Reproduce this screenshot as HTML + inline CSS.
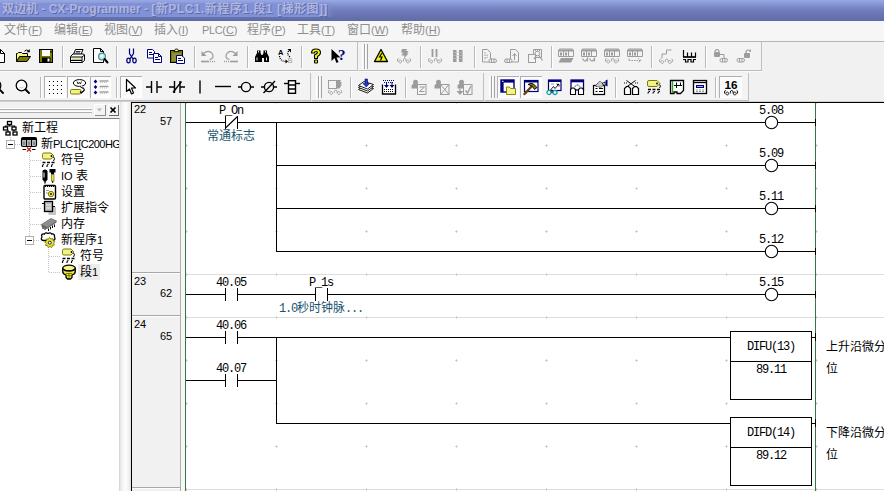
<!DOCTYPE html>
<html lang="zh-CN">
<head>
<meta charset="utf-8">
<title>双边机 - CX-Programmer</title>
<style>
html,body{margin:0;padding:0}
body{width:884px;height:491px;overflow:hidden;position:relative;background:#f1f1f1;
 font-family:"Liberation Sans","Noto Sans CJK SC","WenQuanYi Zen Hei",sans-serif;font-size:12px;color:#000}
.abs{position:absolute}
#title{position:absolute;left:0;top:0;width:884px;height:21px;
 background:linear-gradient(to bottom,#98a8e5 0px,#8b9bd9 3px,#7a88c8 7px,#6f7cba 11px,#6673af 16px,#606ca7 21px)}
#title em{position:absolute;left:0;top:3px;width:334px;height:14px;background:linear-gradient(to right,#8292d9 0,#8090d6 322px,rgba(128,144,214,0) 334px)}
#title span{position:absolute;left:2px;top:2px;font-weight:bold;font-family:"Liberation Sans","Noto Sans CJK SC",sans-serif;font-size:12px;line-height:14px;color:#afb6de;white-space:nowrap;letter-spacing:0px;
 text-shadow:1px 1px 0 rgba(70,80,150,.6)}
#menu{position:absolute;left:0;top:21px;width:884px;height:20px;background:#f6f6f6;border-bottom:1px solid #b4b4b4}
#menu span{position:absolute;top:2px;font-size:12px;line-height:15px;color:#8e8e8e;white-space:nowrap}
#menu b{font-weight:normal;font-size:11px}
#menu u{text-decoration:underline;text-underline-offset:1px}
.tb{position:absolute;background:#f3f3f3;border-right:1px solid #c0c0c0;border-bottom:1px solid #bdbdbd;box-shadow:0 1px 0 #fbfbfb}
.grip{position:absolute;width:1px;border-left:1px solid #fff;border-right:1px solid #a4a4a4;background:#f3f3f3}
.sep{position:absolute;width:1px;background:#b9b9b9;box-shadow:1px 0 0 #fff}
.prs{position:absolute;background:#fbfbfb;box-shadow:inset 1px 1px 0 #b0b0b0,inset -1px -1px 0 #fff}
.ic{position:absolute;width:16px;height:16px;overflow:visible}
#left{position:absolute;left:0;top:118px;width:119px;height:373px;background:#fff;border-top:1px solid #7f7f7f;border-right:1px solid #d8d8d8;overflow:hidden}
.tr{position:absolute;font-size:12px;line-height:16px;white-space:nowrap;color:#000}
.lad{font-family:"Liberation Mono","Noto Sans CJK SC","WenQuanYi Zen Hei",monospace}
</style>
</head>
<body>
<div id="title"><em></em><span>双边机 - CX-Programmer - <i style="font-style:normal;letter-spacing:.5px">[新PLC1.新程序1.段1 [梯形图]]</i></span></div>
<div id="menu">
<span style="left:4px">文件<b>(<u>F</u>)</b></span>
<span style="left:54px">编辑<b>(<u>E</u>)</b></span>
<span style="left:104px">视图<b>(<u>V</u>)</b></span>
<span style="left:154px">插入<b>(<u>I</u>)</b></span>
<span style="left:202px"><b style="letter-spacing:-.4px">PLC</b><b>(<u>C</u>)</b></span>
<span style="left:247px">程序<b>(<u>P</u>)</b></span>
<span style="left:297px">工具<b>(<u>T</u>)</b></span>
<span style="left:347px">窗口<b>(<u>W</u>)</b></span>
<span style="left:401px">帮助<b>(<u>H</u>)</b></span>
</div>
<div class="tb" style="left:-5px;top:42px;width:362px;height:28px"></div>
<div class="tb" style="left:359px;top:42px;width:402px;height:28px"></div>
<div class="grip" style="left:362px;top:44px;height:25px"></div><div class="grip" style="left:365px;top:44px;height:25px"></div>
<svg class="ic" style="left:-9px;top:48px" width="16" height="16" viewBox="0 0 16 16"><path d="M2.5 1.5h7l4 4v9h-11z" fill="#fff" stroke="#000"/><path d="M9.5 1.5v4h4" fill="none" stroke="#000"/></svg>
<svg class="ic" style="left:15px;top:48px" width="16" height="16" viewBox="0 0 16 16"><path d="M1.5 13.5v-8h1l1-1h3l1 1h5v3" fill="#f3f389" stroke="#000"/><path d="M1.5 13.5l3-5h11l-3.5 5z" fill="#7b7b00" stroke="#000" stroke-linejoin="round"/><path d="M9.5 3.2q2-2.4 4.2-.2" fill="none" stroke="#000"/><path d="M14.8 1v3.2h-3.2z" fill="#000"/></svg>
<svg class="ic" style="left:38px;top:48px" width="16" height="16" viewBox="0 0 16 16"><rect x="1.5" y="1.5" width="13" height="13" fill="#7b7b00" stroke="#000"/><rect x="4" y="2" width="8" height="6" fill="#fff"/><rect x="4" y="9.5" width="8.5" height="5" fill="#000"/><rect x="9.5" y="10.5" width="2" height="3" fill="#fff"/><rect x="12.5" y="3" width="1" height="2" fill="#000"/></svg>
<svg class="ic" style="left:69px;top:48px" width="16" height="16" viewBox="0 0 16 16"><path d="M4.5 6.5l2-5h7.5l-2 5z" fill="#fff" stroke="#000" stroke-linejoin="round"/><path d="M7 3.5h4.5M6.5 5h4.5" stroke="#000" stroke-width=".8"/><path d="M1.5 8.500l2.500-2.500h10.500l1 1v5.500l-2.500 2h-11.500z" fill="#fff" stroke="#000" stroke-linejoin="round"/><path d="M1.500 9h11.500l2.500-2M13 9v5.500" fill="none" stroke="#000"/><rect x="2.500" y="10.500" width="9.500" height="1.500" fill="#c9c97a"/><path d="M2 12.500h11" stroke="#000"/></svg>
<svg class="ic" style="left:92px;top:48px" width="16" height="16" viewBox="0 0 16 16"><path d="M1.500 .500h7l3 3v11h-10z" fill="#fff" stroke="#000"/><path d="M8.500 .500v3h3" fill="none" stroke="#000"/><circle cx="10" cy="8.500" r="3.400" fill="#b9eeee" stroke="#4f8f8f" stroke-width="1.300"/><circle cx="9.500" cy="8" r="1.500" fill="#fff" opacity=".7"/><path d="M12.500 11l3 3.500" stroke="#000" stroke-width="2" stroke-linecap="round"/></svg>
<svg class="ic" style="left:123px;top:48px" width="16" height="16" viewBox="0 0 16 16"><path d="M6.500 .5v5l3.500 5.500M10.500 .5v5l-3.500 5.500" fill="none" stroke="#00007b" stroke-width="1.200"/><ellipse cx="5.500" cy="12.500" rx="1.700" ry="2.300" fill="none" stroke="#00007b" stroke-width="1.200"/><ellipse cx="11.500" cy="12.500" rx="1.700" ry="2.300" fill="none" stroke="#00007b" stroke-width="1.200"/></svg>
<svg class="ic" style="left:146px;top:48px" width="16" height="16" viewBox="0 0 16 16"><path d="M1.500 1.500h5l2 2v6.500h-7z" fill="#fff" stroke="#00007b"/><path d="M3 4.500h3M3 6.500h4" stroke="#00007b"/><path d="M7.500 5.500h5l3 3v6h-8z" fill="#fff" stroke="#00007b"/><path d="M12.500 5.500v3h3" fill="none" stroke="#00007b"/><path d="M9 9.500h3M9 11.500h5" stroke="#00007b"/></svg>
<svg class="ic" style="left:169px;top:48px" width="16" height="16" viewBox="0 0 16 16"><rect x="1.500" y="2.500" width="12" height="12" fill="#7b7b00" stroke="#000"/><path d="M5 3.500l1.500-2.500h2l1.500 2.500z" fill="#f3f389" stroke="#000" stroke-width=".8"/><path d="M3 5h9v8h-9z" fill="#8e8e3f"/><path d="M7.500 7.500h5l3 2.500v5.500h-8z" fill="#fff" stroke="#00007b"/><path d="M9 10.500h3M9 12.500h5" stroke="#00007b"/></svg>
<svg class="ic" style="left:200px;top:48px" width="16" height="16" viewBox="0 0 16 16"><path d="M3.500 5.500q5.500-4.500 9 .5 2 4.500-3 5.500" fill="none" stroke="#9c9c9c" stroke-width="1.200"/><path d="M1.500 3v5h5z" fill="#9c9c9c"/><path d="M1 13.500h8" stroke="#9c9c9c" stroke-width="1.600"/><path d="M10 13.500h5" stroke="#9c9c9c" stroke-width="1.400" stroke-dasharray="1 1"/></svg>
<svg class="ic" style="left:223px;top:48px" width="16" height="16" viewBox="0 0 16 16"><path d="M12.500 5.500q-5.500-4.500-9 .5-2 4.500 3 5.500" fill="none" stroke="#9c9c9c" stroke-width="1.200"/><path d="M14.500 3v5h-5z" fill="#9c9c9c"/><path d="M7 13.500h8" stroke="#9c9c9c" stroke-width="1.600"/><path d="M1 13.500h5" stroke="#9c9c9c" stroke-width="1.400" stroke-dasharray="1 1"/></svg>
<svg class="ic" style="left:254px;top:48px" width="16" height="16" viewBox="0 0 16 16"><path d="M1 14v-5l2-4v-2.500h3.500v2.500l1 2h1l1-2v-2.500h3.500v2.500l2 4v5h-5v-4h-2v4z" fill="#000"/><path d="M4.500 3v1.500M3 9.500v3M12.500 9.500v3M11.500 3v1.500" stroke="#fff" stroke-width=".9"/></svg>
<svg class="ic" style="left:277px;top:48px" width="16" height="16" viewBox="0 0 16 16"><text x="1" y="6.500" font-family="Liberation Sans,sans-serif" font-size="7.500" font-weight="bold" fill="#000">A</text><text x="10.500" y="15" font-family="Liberation Sans,sans-serif" font-size="7.500" fill="#9c9c9c">B</text><path d="M2.500 8q.5 5 6 5.500" fill="none" stroke="#000" stroke-width="1.200" stroke-dasharray="1 1"/><path d="M8.500 11.500l2.500 2-2.500 2z" fill="#000"/><path d="M13 9q-4-3-1-6.500" fill="none" stroke="#000" stroke-width="1.200" stroke-dasharray="1 1"/><path d="M10.500 1h3.500v3.500z" fill="#000"/></svg>
<svg class="ic" style="left:308px;top:48px" width="16" height="16" viewBox="0 0 16 16"><path d="M3.500 5q0-4 4.500-4t4.500 3.500q0 2.500-3 4v2h-3v-3.500q3-1.500 3-2.500 0-1-1.500-1t-1.500 1.500z" fill="#f4f400" stroke="#000" stroke-width="1.100" stroke-linejoin="round"/><rect x="6.500" y="12" width="3" height="3" rx=".8" fill="#f4f400" stroke="#000" stroke-width="1.100"/></svg>
<svg class="ic" style="left:331px;top:48px" width="16" height="16" viewBox="0 0 16 16"><path d="M.5 1v12l3-3 2 5 2-1-2-4.500h4z" fill="#000"/><text x="7" y="11.500" font-family="Liberation Serif,serif" font-size="15" font-weight="bold" fill="#00007b">?</text></svg>
<svg class="ic" style="left:373px;top:48px" width="16" height="16" viewBox="0 0 16 16"><path d="M8 1.500l6.500 12h-13z" fill="#f4f400" stroke="#000" stroke-width="1.300" stroke-linejoin="round"/><path d="M9 5l-2.500 4h2.500l-1.500 3.500" fill="none" stroke="#000" stroke-width="1.200"/></svg>
<svg class="ic" style="left:396px;top:48px" width="16" height="16" viewBox="0 0 16 16"><path d="M6 1h5l-1 2h2.500l-1.500 2.500h1.500l-4.500 5 .5-3h-3l1.500-3h-2z" fill="#9c9c9c"/><path d="M1.5 13.5v-1.5q0-1.5 1.3-1.5M4.2 12.0a1.4 1.5 0 1 0 .1 0M7.3 13.5v-1.5q.2-1.5 1.5-1.5 1.3 0 1.3 1.5v1.5M11.8 12.0a1.4 1.5 0 1 0 .1 0M14.6 13.5v-1.5q0-1.5-1-1.5" stroke="#9c9c9c" stroke-width=".9" fill="none"/></svg>
<svg class="ic" style="left:427px;top:48px" width="16" height="16" viewBox="0 0 16 16"><path d="M5.500 1v8M9.500 1v8" stroke="#9c9c9c" stroke-width="1.800"/><path d="M1.5 13.5v-1.5q0-1.5 1.3-1.5M4.2 12.0a1.4 1.5 0 1 0 .1 0M7.3 13.5v-1.5q.2-1.5 1.5-1.5 1.3 0 1.3 1.5v1.5M11.8 12.0a1.4 1.5 0 1 0 .1 0M14.6 13.5v-1.5q0-1.5-1-1.5" stroke="#9c9c9c" stroke-width=".9" fill="none"/></svg>
<svg class="ic" style="left:450px;top:48px" width="16" height="16" viewBox="0 0 16 16"><rect x="3" y="2" width="3.500" height="12" fill="#9c9c9c"/><rect x="9" y="2" width="3.500" height="12" fill="#9c9c9c"/><path d="M3 4.500h10M3 7.500h10M3 10.500h10" stroke="#c4c4c4" stroke-width=".6"/></svg>
<svg class="ic" style="left:481px;top:48px" width="16" height="16" viewBox="0 0 16 16"><path d="M1.500 1.500h5l3 3v9.500h-8z" fill="none" stroke="#9c9c9c"/><path d="M4 4v6M6 6.500v3M3.500 11l3-2" stroke="#9c9c9c" stroke-dasharray="1.500 1"/><rect x="8" y="11" width="7.500" height="3.500" rx="1.700" fill="#f3f3f3" stroke="#9c9c9c"/><path d="M10.5 11v3.500M13 11v3.500" stroke="#9c9c9c"/></svg>
<svg class="ic" style="left:504px;top:48px" width="16" height="16" viewBox="0 0 16 16"><path d="M6.500 1.500h5l3 3v9.500h-8z" fill="none" stroke="#9c9c9c"/><path d="M10.500 12v-6M8.500 8l2-2.500 2 2.500" fill="none" stroke="#9c9c9c"/><rect x="0.5" y="11" width="7.500" height="3.500" rx="1.700" fill="#f3f3f3" stroke="#9c9c9c"/><path d="M3.0 11v3.500M5.5 11v3.500" stroke="#9c9c9c"/></svg>
<svg class="ic" style="left:527px;top:48px" width="16" height="16" viewBox="0 0 16 16"><rect x="1.500" y="6.500" width="7" height="8" fill="none" stroke="#9c9c9c"/><path d="M6.500 6v-4.500h8v8h-5.500" fill="none" stroke="#9c9c9c"/><circle cx="10.500" cy="5.500" r="2.300" fill="none" stroke="#9c9c9c"/><path d="M9 8l-2 3M12 7.500l3.500 5" stroke="#9c9c9c" stroke-width="1.200"/><path d="M8 2.500h5" stroke="#9c9c9c" stroke-dasharray="1 1"/></svg>
<svg class="ic" style="left:558px;top:48px" width="16" height="16" viewBox="0 0 16 16"><path d="M.5 3q0-2 1.500-2h12q1.500 0 1.500 2v5.500h-15z" fill="#f3f3f3" stroke="#9c9c9c"/><path d="M1 2.500h14" stroke="#9c9c9c" stroke-width="2"/><path d="M5.500 3v5.500M10.500 3v5.500" stroke="#9c9c9c"/><rect x="2" y="4.500" width="2" height="3" fill="#9c9c9c"/><rect x="7" y="4.500" width="2" height="3" fill="#9c9c9c"/><path d="M3 10h12.500l-2.500 4.500h-12.500z" fill="#9c9c9c"/></svg>
<svg class="ic" style="left:581px;top:48px" width="16" height="16" viewBox="0 0 16 16"><path d="M.5 3q0-2 1.500-2h12q1.500 0 1.500 2v5.500h-15z" fill="#f3f3f3" stroke="#9c9c9c"/><path d="M1 2.500h14" stroke="#9c9c9c" stroke-width="2"/><path d="M5.500 3v5.500M10.500 3v5.500" stroke="#9c9c9c"/><rect x="2" y="4.500" width="2" height="3" fill="#9c9c9c"/><rect x="7" y="4.500" width="2" height="3" fill="#9c9c9c"/><path d="M1.500 10.500q1.500 3.500 3.500 2l1.500-2v3M8.500 10.500q1.500 3.500 3.500 2l1.500-2v3" fill="none" stroke="#9c9c9c" stroke-width="1.100"/></svg>
<svg class="ic" style="left:604px;top:48px" width="16" height="16" viewBox="0 0 16 16"><path d="M.5 3q0-2 1.500-2h12q1.500 0 1.500 2v5.500h-15z" fill="#f3f3f3" stroke="#9c9c9c"/><path d="M1 2.500h14" stroke="#9c9c9c" stroke-width="2"/><path d="M5.500 3v5.500M10.500 3v5.500" stroke="#9c9c9c"/><rect x="2" y="4.500" width="2" height="3" fill="#9c9c9c"/><rect x="7" y="4.500" width="2" height="3" fill="#9c9c9c"/><path d="M1.5 13.5v-1.5q0-1.5 1.3-1.5M4.2 12.0a1.4 1.5 0 1 0 .1 0M7.3 13.5v-1.5q.2-1.5 1.5-1.5 1.3 0 1.3 1.5v1.5M11.8 12.0a1.4 1.5 0 1 0 .1 0M14.6 13.5v-1.5q0-1.5-1-1.5" stroke="#9c9c9c" stroke-width=".9" fill="none"/></svg>
<svg class="ic" style="left:627px;top:48px" width="16" height="16" viewBox="0 0 16 16"><path d="M.5 3q0-2 1.500-2h12q1.500 0 1.500 2v5.500h-15z" fill="#f3f3f3" stroke="#9c9c9c"/><path d="M1 2.500h14" stroke="#9c9c9c" stroke-width="2"/><path d="M5.500 3v5.500M10.500 3v5.500" stroke="#9c9c9c"/><rect x="2" y="4.500" width="2" height="3" fill="#9c9c9c"/><rect x="7" y="4.500" width="2" height="3" fill="#9c9c9c"/><path d="M2 12.500h12M11 10.500l3 2-3 2M2 10.500v2" fill="none" stroke="#9c9c9c" stroke-dasharray="1.500 1"/></svg>
<svg class="ic" style="left:658px;top:48px" width="16" height="16" viewBox="0 0 16 16"><path d="M4 10.500v-4.500h4.500v-4h5" fill="none" stroke="#9c9c9c"/><path d="M1.5 14v-1.5q0-1.5 1.3-1.5M4.2 12.5a1.4 1.5 0 1 0 .1 0M7.3 14v-1.5q.2-1.5 1.5-1.5 1.3 0 1.3 1.5v1.5M11.8 12.5a1.4 1.5 0 1 0 .1 0M14.6 14v-1.5q0-1.5-1-1.5" stroke="#9c9c9c" stroke-width=".9" fill="none"/></svg>
<svg class="ic" style="left:681px;top:48px" width="16" height="16" viewBox="0 0 16 16"><path d="M2.500 2v7M6.500 4.500v4.500M10.500 4.500v4.500M14.500 4.500v4.500" stroke="#000" stroke-width="1.200"/><path d="M2 9h13" stroke="#000" stroke-width="1.700"/><path d="M2 11.500h2.500v2.500h2.500v-2.500h3v2.500h2.500v-2.500h2.500" fill="none" stroke="#000" stroke-width="1.200"/></svg>
<svg class="ic" style="left:713px;top:48px" width="16" height="16" viewBox="0 0 16 16"><path d="M2 4q0-2.500 2-2.500t2 2.500v.5" fill="none" stroke="#9c9c9c" stroke-width="1.200"/><rect x="1" y="4" width="6" height="5" rx="1" fill="#9c9c9c"/><path d="M7 6.500h4v4" fill="none" stroke="#9c9c9c"/><rect x="7" y="10.5" width="7.500" height="3.500" rx="1.700" fill="#f3f3f3" stroke="#9c9c9c"/><path d="M9.5 10.5v3.500M12 10.5v3.500" stroke="#9c9c9c"/></svg>
<svg class="ic" style="left:736px;top:48px" width="16" height="16" viewBox="0 0 16 16"><path d="M10 5q0-3 2-3t2 2" fill="none" stroke="#9c9c9c" stroke-width="1.200"/><rect x="8" y="5" width="6" height="5" rx="1" fill="#9c9c9c"/><path d="M14.500 1.500v2" stroke="#9c9c9c"/><rect x="1" y="10.5" width="7.500" height="3.500" rx="1.700" fill="#f3f3f3" stroke="#9c9c9c"/><path d="M3.5 10.5v3.500M6 10.5v3.500" stroke="#9c9c9c"/></svg>
<div class="sep" style="left:62px;top:46px;height:22px"></div>
<div class="sep" style="left:116px;top:46px;height:22px"></div>
<div class="sep" style="left:194px;top:46px;height:22px"></div>
<div class="sep" style="left:247px;top:46px;height:22px"></div>
<div class="sep" style="left:301px;top:46px;height:22px"></div>
<div class="sep" style="left:420px;top:46px;height:22px"></div>
<div class="sep" style="left:474px;top:46px;height:22px"></div>
<div class="sep" style="left:551px;top:46px;height:22px"></div>
<div class="sep" style="left:651px;top:46px;height:22px"></div>
<div class="sep" style="left:705px;top:46px;height:22px"></div>
<div class="tb" style="left:-5px;top:73px;width:315px;height:27px"></div>
<div class="tb" style="left:312px;top:73px;width:171px;height:27px"></div>
<div class="grip" style="left:316px;top:76px;height:22px"></div><div class="grip" style="left:319px;top:76px;height:22px"></div>
<div class="tb" style="left:485px;top:73px;width:263px;height:27px"></div>
<div class="grip" style="left:489px;top:76px;height:22px"></div><div class="grip" style="left:492px;top:76px;height:22px"></div>
<div class="prs" style="left:44px;top:76px;width:22px;height:22px"></div>
<div class="prs" style="left:67px;top:76px;width:22px;height:22px"></div>
<div class="prs" style="left:90px;top:76px;width:21px;height:22px"></div>
<div class="prs" style="left:120px;top:76px;width:22px;height:22px"></div>
<div class="prs" style="left:497px;top:76px;width:22px;height:22px"></div>
<div class="prs" style="left:520px;top:76px;width:22px;height:22px"></div>
<div class="prs" style="left:719px;top:76px;width:23px;height:22px"></div>
<svg class="ic" style="left:-11.5px;top:79px" width="16" height="16" viewBox="0 0 16 16"><circle cx="6.500" cy="6.500" r="5.300" fill="#fdfdfd" stroke="#000" stroke-width="1.300"/><path d="M4.500 8q2 2 4 0" fill="none" stroke="#c8c8c8"/><path d="M10.500 10.500l3.500 3.500" stroke="#000" stroke-width="1.900" stroke-linecap="round"/></svg>
<svg class="ic" style="left:15px;top:79px" width="16" height="16" viewBox="0 0 16 16"><circle cx="6.500" cy="6.500" r="5.300" fill="#fdfdfd" stroke="#000" stroke-width="1.300"/><path d="M4.500 8q2 2 4 0" fill="none" stroke="#c8c8c8"/><path d="M10.500 10.500l3.500 3.500" stroke="#000" stroke-width="1.900" stroke-linecap="round"/></svg>
<svg class="ic" style="left:47px;top:79px" width="16" height="16" viewBox="0 0 16 16"><rect x="2" y="2" width="1" height="1" fill="#000"/><rect x="2" y="6" width="1" height="1" fill="#000"/><rect x="2" y="10" width="1" height="1" fill="#000"/><rect x="2" y="14" width="1" height="1" fill="#000"/><rect x="6" y="2" width="1" height="1" fill="#000"/><rect x="6" y="6" width="1" height="1" fill="#000"/><rect x="6" y="10" width="1" height="1" fill="#000"/><rect x="6" y="14" width="1" height="1" fill="#000"/><rect x="10" y="2" width="1" height="1" fill="#000"/><rect x="10" y="6" width="1" height="1" fill="#000"/><rect x="10" y="10" width="1" height="1" fill="#000"/><rect x="10" y="14" width="1" height="1" fill="#000"/><rect x="14" y="2" width="1" height="1" fill="#000"/><rect x="14" y="6" width="1" height="1" fill="#000"/><rect x="14" y="10" width="1" height="1" fill="#000"/><rect x="14" y="14" width="1" height="1" fill="#000"/></svg>
<svg class="ic" style="left:70px;top:79px" width="16" height="16" viewBox="0 0 16 16"><path d="M11.500 6.500l3 4-4.500-3z" fill="#fff" stroke="#000" stroke-width=".9" stroke-linejoin="round"/><ellipse cx="9.500" cy="4" rx="6.200" ry="3.400" fill="#fff" stroke="#000" stroke-width="1"/><path d="M11 6.800l1.500 1" stroke="#fff" stroke-width="1.200"/><path d="M7 2.500l1 2.500 1.200-1.700 1.200 1.700 1-2.500" fill="none" stroke="#000" stroke-width=".8"/><rect x=".5" y="10.500" width="10.500" height="4.500" rx="1.200" fill="#f3f389" stroke="#7b7b00"/><path d="M10 12.500l1.500 1.500 3-3" fill="none" stroke="#000" stroke-width="1.200"/></svg>
<svg class="ic" style="left:93px;top:79px" width="16" height="16" viewBox="0 0 16 16"><path d="M2.500 0.5l1.800 2-1.800 2-1.800-2z" fill="#00007b"/><path d="M6.500 2.0h9" stroke="#9c9c9c" stroke-width="1.400"/><path d="M7 3.5h8" stroke="#c4c4c4" stroke-dasharray="1 1"/><path d="M2.500 6l1.800 2-1.800 2-1.800-2z" fill="#00007b"/><path d="M6.500 7.5h9" stroke="#9c9c9c" stroke-width="1.400"/><path d="M7 9h8" stroke="#c4c4c4" stroke-dasharray="1 1"/><path d="M2.500 11.5l1.800 2-1.800 2-1.800-2z" fill="#00007b"/><path d="M6.500 13.0h9" stroke="#9c9c9c" stroke-width="1.400"/><path d="M7 14.5h8" stroke="#c4c4c4" stroke-dasharray="1 1"/></svg>
<svg class="ic" style="left:123px;top:79px" width="16" height="16" viewBox="0 0 16 16"><path d="M3.500 .500v12l3-2.500 2 5 2-1-2-5h4z" fill="#fff" stroke="#000" stroke-width="1.200" stroke-linejoin="round"/></svg>
<svg class="ic" style="left:146px;top:79px" width="16" height="16" viewBox="0 0 16 16"><path d="M0 8h5M11 8h5" stroke="#000" stroke-width="1.400"/><path d="M5.500 2v12M11 2v12" stroke="#000" stroke-width="1.400"/></svg>
<svg class="ic" style="left:169px;top:79px" width="16" height="16" viewBox="0 0 16 16"><path d="M0 8h5M11 8h5" stroke="#000" stroke-width="1.400"/><path d="M5.500 2v12M11 2v12" stroke="#000" stroke-width="1.400"/><path d="M4 13.500l8.500-11" stroke="#000" stroke-width="1.300"/></svg>
<svg class="ic" style="left:192px;top:79px" width="16" height="16" viewBox="0 0 16 16"><path d="M8 1.500v13" stroke="#000" stroke-width="1.400"/></svg>
<svg class="ic" style="left:215px;top:79px" width="16" height="16" viewBox="0 0 16 16"><path d="M0 7.500h16" stroke="#000" stroke-width="1.400"/></svg>
<svg class="ic" style="left:238px;top:79px" width="16" height="16" viewBox="0 0 16 16"><path d="M0 8h3.500M12.500 8h3.500" stroke="#000" stroke-width="1.500"/><circle cx="8" cy="8" r="4.600" fill="none" stroke="#000" stroke-width="1.400"/></svg>
<svg class="ic" style="left:261px;top:79px" width="16" height="16" viewBox="0 0 16 16"><path d="M0 8h3.500M12.500 8h3.500" stroke="#000" stroke-width="1.500"/><circle cx="8" cy="8" r="4.600" fill="none" stroke="#000" stroke-width="1.400"/><path d="M2.500 14l11.500-12" stroke="#000" stroke-width="1.300"/></svg>
<svg class="ic" style="left:284px;top:79px" width="16" height="16" viewBox="0 0 16 16"><path d="M0 4.500h16" stroke="#000" stroke-width="1.400"/><rect x="4.500" y="1.700" width="7" height="12.600" fill="#fff" stroke="#000" stroke-width="1.400"/><path d="M4.500 6h7M4.500 10h7" stroke="#000" stroke-width="1.300"/></svg>
<svg class="ic" style="left:327px;top:79px" width="16" height="16" viewBox="0 0 16 16"><rect x="1.500" y="1.500" width="8" height="8" fill="none" stroke="#9c9c9c"/><path d="M9 1h5l-1 2h2l-1.500 2.500h1.500l-2.500 4h-3.500z" fill="#9c9c9c"/><path d="M1.5 14v-1.5q0-1.5 1.3-1.5M4.2 12.5a1.4 1.5 0 1 0 .1 0M7.3 14v-1.5q.2-1.5 1.5-1.5 1.3 0 1.3 1.5v1.5M11.8 12.5a1.4 1.5 0 1 0 .1 0M14.6 14v-1.5q0-1.5-1-1.5" stroke="#9c9c9c" stroke-width=".9" fill="none"/></svg>
<svg class="ic" style="left:358px;top:79px" width="16" height="16" viewBox="0 0 16 16"><path d="M.5 10.500l5.500-4 9.500 3-6 4.500z" fill="#fff" stroke="#000" stroke-width=".9"/><path d="M.5 8.500l5.500-4 9.500 3-6 4.500z" fill="#fff" stroke="#000" stroke-width=".9"/><path d="M.5 6.500l5.500-4 9.500 3-6 4.500z" fill="#fff" stroke="#000" stroke-width=".9"/><path d="M7 0h2.500v4.500h2l-3.200 3.500-3.300-3.500h2z" fill="#1b3fc0" stroke="#00007b" stroke-width=".6"/></svg>
<svg class="ic" style="left:381px;top:79px" width="16" height="16" viewBox="0 0 16 16"><path d="M1.500 5.500v9.500h13v-9.500" fill="#fff" stroke="#000" stroke-width="1.300"/><path d="M3 10.500h10M3 12.500h10" stroke="#000" stroke-dasharray="1 1"/><path d="M2 1.500h12M3 3.500h10" stroke="#00007b" stroke-dasharray="1 1"/><path d="M5 3v3h-2l2.500 3 2.500-3h-2v-3zM10.500 3v3h-2l2.500 3 2.500-3h-2v-3z" fill="#00007b"/></svg>
<svg class="ic" style="left:411px;top:79px" width="16" height="16" viewBox="0 0 16 16"><circle cx="4.500" cy="3.200" r="2.500" fill="#9c9c9c"/><path d="M.5 9.500v-2.500q0-2 2-2h4q2 0 2 2v2.500z" fill="#9c9c9c"/><rect x="6.500" y="5.500" width="8.500" height="10" fill="#f3f3f3" stroke="#9c9c9c"/><path d="M8.500 8h5l-5 4.500h5" fill="none" stroke="#9c9c9c"/></svg>
<svg class="ic" style="left:434px;top:79px" width="16" height="16" viewBox="0 0 16 16"><circle cx="4.500" cy="3.200" r="2.500" fill="#9c9c9c"/><path d="M.5 9.500v-2.500q0-2 2-2h4q2 0 2 2v2.500z" fill="#9c9c9c"/><rect x="6.500" y="5.500" width="8.500" height="10" fill="#f3f3f3" stroke="#9c9c9c"/><path d="M7 6l7.500 9M14.500 6l-7.500 9" stroke="#9c9c9c"/></svg>
<svg class="ic" style="left:457px;top:79px" width="16" height="16" viewBox="0 0 16 16"><circle cx="4.500" cy="3.200" r="2.500" fill="#9c9c9c"/><path d="M.5 9.500v-2.500q0-2 2-2h4q2 0 2 2v2.500z" fill="#9c9c9c"/><rect x="6.500" y="5.500" width="8.500" height="10" fill="#f3f3f3" stroke="#9c9c9c"/><path d="M8.500 11.500l2 2.500 3.500-7" fill="none" stroke="#9c9c9c" stroke-width="1.300"/><path d="M3 9.500v5M.8 12.500l2.200 2.500 2.200-2.500z" fill="#9c9c9c" stroke="#9c9c9c" stroke-width="1.200"/></svg>
<svg class="ic" style="left:500px;top:79px" width="16" height="16" viewBox="0 0 16 16"><rect x="1" y="1" width="13" height="12" fill="#fff" stroke="#00007b" stroke-width="1.400"/><rect x="1" y="1" width="13" height="2.600" fill="#00007b"/><rect x="1" y="1" width="2.600" height="12" fill="#00007b"/><rect x="2" y="1.800" width="1.500" height="1" fill="#fff"/><path d="M6.500 15.500v-7.500h3l1 1.500h5v6z" fill="#f3f389" stroke="#7b7b00" stroke-width=".9"/></svg>
<svg class="ic" style="left:523px;top:79px" width="16" height="16" viewBox="0 0 16 16"><rect x="1.500" y="1.500" width="13.500" height="11" fill="#fff" stroke="#00007b" stroke-width="1.200"/><rect x="1.500" y="1.500" width="13.500" height="2" fill="#00007b"/><path d="M1.500 15l7-7.500" stroke="#6b3c10" stroke-width="2.400" stroke-linecap="round"/><path d="M5 5.500q3-2 5.500-.5l3.500 3.500-2.500 2-2.500-3.500q-2-1-4-1.500z" fill="#7b7b00" stroke="#000" stroke-width=".9"/></svg>
<svg class="ic" style="left:546px;top:79px" width="16" height="16" viewBox="0 0 16 16"><rect x="2.500" y="1" width="12.500" height="10.500" fill="#fff" stroke="#00007b" stroke-width="1.200"/><rect x="2.500" y="1" width="12.500" height="2" fill="#00007b"/><path d="M5 5h3M10 5h3" stroke="#9c9c9c"/><path d="M4.500 11l3-3.500 1.500 2 3.500-4M11 5.500h2v2" fill="none" stroke="#000" stroke-width=".9"/><circle cx="3" cy="13.500" r="2" fill="#fff" stroke="#1fa3a3" stroke-width="1.300"/><circle cx="9" cy="13.500" r="2" fill="#fff" stroke="#1fa3a3" stroke-width="1.300"/><path d="M5 13h2" stroke="#000"/></svg>
<svg class="ic" style="left:569px;top:79px" width="16" height="16" viewBox="0 0 16 16"><rect x="2" y="1" width="12.500" height="10" fill="#fff" stroke="#00007b" stroke-width="1.300"/><rect x="2" y="1" width="12.500" height="2.300" fill="#00007b"/><path d="M6 7.500q2.500-3 5 0" fill="none" stroke="#000" stroke-dasharray="1.500 1"/><path d="M1.500 15.500v-5l1.500-1.500h2l1.500 1.500v5zM9.500 15.500v-5l1.500-1.500h2l1.500 1.500v5z" fill="#fff" stroke="#000" stroke-width="1.100"/></svg>
<svg class="ic" style="left:592px;top:79px" width="16" height="16" viewBox="0 0 16 16"><rect x="1.500" y="6.500" width="11" height="9" fill="#fff" stroke="#000" stroke-width="1.200"/><path d="M3.500 9.500h2M7 9.500h4M3.500 12.500h2M7 12.500h4" stroke="#000"/><path d="M3 7l5-5 4 3.500-3 3z" fill="#c9c9c9" stroke="#000" stroke-width=".8" stroke-dasharray="1 .6"/><path d="M10 4.500l3-1.500v4z" fill="#fff" stroke="#000" stroke-width=".8"/><path d="M13.500 1.500l2-1v7l-2-1z" fill="#00007b"/></svg>
<svg class="ic" style="left:623px;top:79px" width="16" height="16" viewBox="0 0 16 16"><path d="M1.500 15.500v-6l2-2h2l2 2v6zM9.500 15.500v-6l2-2h2l2 2v6z" fill="#fff" stroke="#000" stroke-width="1.200"/><path d="M3.500 1.500l9 6.500M12.500 1.500l-9 6.500" stroke="#000" stroke-width="1"/><path d="M1 4h3M12 4h3" stroke="#000" stroke-dasharray="1 1"/></svg>
<svg class="ic" style="left:646px;top:79px" width="16" height="16" viewBox="0 0 16 16"><path d="M1.500 3q0-1.500 1.500-1.500h8l3 3-3 3h-8q-1.500 0-1.500-1.500z" fill="#f3f389" stroke="#7b7b00" stroke-width="1"/><circle cx="11" cy="4.500" r=".9" fill="#000"/><path d="M13.500 5.500q2 1.500 0 3.500" fill="none" stroke="#000"/><path d="M2 10.500h12" stroke="#000" stroke-width="1.300" stroke-dasharray="3 1.500"/><path d="M2 14.500q0-2 2-2M7 14.500q0-2 2-2M12 14.500q0-2 2-2" fill="none" stroke="#000" stroke-width="1.100"/></svg>
<svg class="ic" style="left:669px;top:79px" width="16" height="16" viewBox="0 0 16 16"><path d="M1.500 1.500h13v10l-3 3h-3.500v-1.500h-3v1.500h-3.500z" fill="#fff" stroke="#000" stroke-width="1.300"/><path d="M3.500 2v12" stroke="#2e9e2e" stroke-width="1.400"/><path d="M5 6.500h8M7.500 3.500v5.500M11.500 3.500v3" stroke="#000" stroke-width="1"/></svg>
<svg class="ic" style="left:692px;top:79px" width="16" height="16" viewBox="0 0 16 16"><rect x="1.500" y="1.500" width="13" height="13" fill="#fff" stroke="#000" stroke-width="1.300"/><path d="M2 3.500h12" stroke="#000" stroke-width="1.300"/><rect x="4.500" y="6.500" width="7" height="2" fill="#9fa7e6" stroke="#00007b" stroke-width="1"/><path d="M4 11h8M4 12.500h8" stroke="#9c9c9c" stroke-dasharray="2 1"/></svg>
<svg class="ic" style="left:723px;top:79px" width="16" height="16" viewBox="0 0 16 16"><text x="1.500" y="10" font-family="Liberation Sans,DejaVu Sans,sans-serif" font-size="11.500" font-weight="bold" fill="#000" textLength="13" lengthAdjust="spacingAndGlyphs">16</text><path d="M1.5 14.5v-1.5q0-1.5 1.3-1.5M4.2 13.0a1.4 1.5 0 1 0 .1 0M7.3 14.5v-1.5q.2-1.5 1.5-1.5 1.3 0 1.3 1.5v1.5M11.8 13.0a1.4 1.5 0 1 0 .1 0M14.6 14.5v-1.5q0-1.5-1-1.5" stroke="#000" stroke-width=".9" fill="none"/></svg>
<div class="sep" style="left:40px;top:77px;height:21px"></div>
<div class="sep" style="left:116px;top:77px;height:21px"></div>
<div class="sep" style="left:350px;top:77px;height:21px"></div>
<div class="sep" style="left:405px;top:77px;height:21px"></div>
<div class="sep" style="left:615px;top:77px;height:21px"></div>
<div class="sep" style="left:715px;top:77px;height:21px"></div>
<div class="abs" style="left:0;top:101px;width:884px;height:1px;background:#cfcfcf"></div>
<!-- left pane header -->
<div class="abs" style="left:0;top:108px;width:92px;height:1px;background:#fff"></div>
<div class="abs" style="left:0;top:109px;width:92px;height:1px;background:#b0b0b0"></div>
<div class="abs" style="left:0;top:111px;width:92px;height:1px;background:#fff"></div>
<div class="abs" style="left:0;top:112px;width:92px;height:1px;background:#b0b0b0"></div>
<div class="abs" style="left:94px;top:104px;width:12px;height:12px;background:#f4f4f4;box-shadow:inset 1px 1px 0 #fff,inset -1px -1px 0 #8c8c8c"></div>
<svg class="abs" style="left:94px;top:104px" width="12" height="12"><path d="M3 4.500h5l-2.500 3z" fill="#b4b4b4"/></svg>
<div class="abs" style="left:108px;top:104px;width:11px;height:12px;background:#f4f4f4;box-shadow:inset 1px 1px 0 #fff,inset -1px -1px 0 #6c6c6c"></div>
<svg class="abs" style="left:108px;top:104px" width="11" height="12"><path d="M2.500 3.500l5 5M7.500 3.500l-5 5" stroke="#000" stroke-width="1.700" fill="none"/></svg>
<div id="left">
<!-- tree connectors -->
<svg class="abs" style="left:0;top:0" width="119" height="373" shape-rendering="crispEdges">
<g stroke="#c4c4c4" stroke-width="1" stroke-dasharray="1 1" fill="none">
<path d="M10.5 14v8M15 25.5h6M29.5 34v87M30 41.5h11M30 57.5h11M30 73.5h11M30 89.5h11M30 105.5h11M34 121.5h6M48.5 130v23M49 137.5h11M49 153.5h11"/>
</g>
<rect x="6.5" y="21.5" width="8" height="8" fill="#fff" stroke="#b0b0b0"/><path d="M8 25.5h5" stroke="#000"/>
<rect x="25.5" y="117.5" width="8" height="8" fill="#fff" stroke="#b0b0b0"/><path d="M27 121.5h5" stroke="#000"/>
</svg>
<div class="abs" style="left:78px;top:145px;width:22px;height:16px;background:#ececec"></div>
<span class="tr" style="left:22px;top:1px">新工程</span>
<span class="tr" style="left:41px;top:17px">新<span style="font-size:11px;letter-spacing:-.55px">PLC1[C200HG-CPU43]</span> 离线</span>
<span class="tr" style="left:61px;top:33px">符号</span>
<span class="tr" style="left:61px;top:49px"><span style="font-size:11px">IO</span> 表</span>
<span class="tr" style="left:61px;top:65px">设置</span>
<span class="tr" style="left:61px;top:81px">扩展指令</span>
<span class="tr" style="left:61px;top:97px">内存</span>
<span class="tr" style="left:61px;top:113px">新程序<span style="font-size:11px">1</span></span>
<span class="tr" style="left:80px;top:129px">符号</span>
<span class="tr" style="left:80px;top:145px">段<span style="font-size:11px">1</span></span>
<svg class="ic" style="left:2px;top:1px" width="16" height="16" viewBox="0 0 16 16"><g fill="#fff" stroke="#000" stroke-width="1.3"><rect x="5.500" y="1.500" width="4" height="3"/><rect x="1.500" y="7" width="4" height="3"/><rect x="10" y="7" width="4" height="3"/><rect x="4" y="12" width="4" height="3"/><rect x="11" y="12" width="4" height="3"/></g><path d="M7.500 4.500v1.500M3.500 7v-1h9v1M6 10v2M12 10v1.500" fill="none" stroke="#000" stroke-width="1.200"/></svg>
<svg class="ic" style="left:21px;top:17px" width="16" height="16" viewBox="0 0 16 16"><rect x=".5" y="1.500" width="15" height="9" rx="1.500" fill="#b9b9b9" stroke="#000" stroke-width="1.200"/><rect x="1" y="2" width="14" height="2" fill="#000"/><path d="M5.500 4v6M10.500 4v6" stroke="#000"/><rect x="2" y="5.500" width="2" height="3.500" fill="#8a8a8a"/><rect x="7" y="5.500" width="2" height="3.500" fill="#8a8a8a"/><rect x="12" y="5.500" width="2" height="3.500" fill="#8a8a8a"/><path d="M1.500 13.500h3.500M11 13.500h3.500" stroke="#000" stroke-width="1.200"/><path d="M6 11.500l4 4M10 11.500l-4 4" stroke="#d01818" stroke-width="1.200"/></svg>
<svg class="ic" style="left:41px;top:33px" width="16" height="16" viewBox="0 0 16 16"><path d="M1.500 2.500q0-1.500 1.500-1.500h7l3 3-3 3h-7q-1.500 0-1.500-1.500z" fill="#f3f389" stroke="#7b7b00" stroke-width="1"/><circle cx="10.500" cy="4" r=".9" fill="#000"/><path d="M12.500 5q2 1.500 0 4" fill="none" stroke="#000"/><path d="M1.500 10.500h12" stroke="#000" stroke-width="1.300" stroke-dasharray="3 1.500"/><path d="M1.500 15v-1q0-1.500 1.500-1.500M6 15v-1q0-1.500 1.500-1.500M10.500 15v-1q0-1.500 1.500-1.500" fill="none" stroke="#000" stroke-width="1.200"/></svg>
<svg class="ic" style="left:41px;top:49px" width="16" height="16" viewBox="0 0 16 16"><path d="M1.500 3.500q0-2 2.500-2t2.500 2v8l-1.500 2h-2l-1.500-2z" fill="#000"/><path d="M3 4.500v5" stroke="#fff" stroke-width="1"/><path d="M4 13v2.500" stroke="#000" stroke-width="1.300"/><path d="M8.500 1h6v3.500h-1.500v2h-3v-2h-1.500z" fill="#000"/><rect x="10.500" y="6.500" width="2.500" height="6.500" fill="#e6e65a" stroke="#7b7b00" stroke-width=".8"/><path d="M11.700 13v2" stroke="#000"/></svg>
<svg class="ic" style="left:42px;top:65px" width="16" height="16" viewBox="0 0 16 16"><rect x="2" y="1.500" width="11.500" height="13.500" rx="1" fill="#fff" stroke="#000" stroke-width="1.400"/><path d="M3.500 1v2M5.500 1v2M7.500 1v2M9.500 1v2M11.500 1v2" stroke="#000"/><path d="M4 6.500h3M4 9h2" stroke="#9a9a9a"/><circle cx="9" cy="10" r="2.700" fill="#f0e64a" stroke="#7b7b00" stroke-width="1"/><circle cx="9" cy="10" r=".9" fill="#000"/></svg>
<svg class="ic" style="left:42px;top:81px" width="16" height="16" viewBox="0 0 16 16"><rect x="6.500" y="7" width="7.500" height="8" fill="#c4c4c4"/><rect x="2.500" y="1.500" width="8" height="10" fill="#bdbdbd" stroke="#000" stroke-width="1.300"/><path d="M4 5h5M4 8h5" stroke="#eee" stroke-width="1"/><path d="M0 3.500h2.500M10.500 6.500h2.500" stroke="#000" stroke-width="1.200"/></svg>
<svg class="ic" style="left:41px;top:97px" width="16" height="16" viewBox="0 0 16 16"><path d="M.5 8.500l9.500-6 5.500 2.500-9.500 6.500z" fill="#8e8e8e" stroke="#6a6a6a" stroke-width=".8"/><path d="M.5 8.500v2l5.500 2.500v-1.500z" fill="#5a5a5a"/><path d="M6 11.500v1.500l9.500-6.500v-1.500z" fill="#6f6f6f"/><path d="M7.500 12.500v2.500M9.500 11v2.500M11.500 9.500v2.500M13.500 8.500v2.500M2 11v2M4 12v2" stroke="#000" stroke-width="1"/></svg>
<svg class="ic" style="left:40px;top:113px" width="16" height="16" viewBox="0 0 16 16"><path d="M2 5q-1.500-3.500 2.500-3 1-2 3.500-.5 2.500-1.500 3.500.5 3.500-.5 3 3 1.500 2.500-1.500 3.500l-9.500 0q-3.500-.5-1.500-3.500z" fill="#fff" stroke="#000" stroke-width="1.300"/><path d="M9.500 5.500l1.300 1.500 2-.5.200 2 1.800 1-1.200 1.600.8 1.900-2 .4-.6 2-1.800-.9-1.700 1.100-.7-1.900-2-.3.600-1.900-1.400-1.500 1.700-1.100-.1-2 2 .3z" fill="#e9e33c" stroke="#7b7b00" stroke-width=".9"/><circle cx="9.800" cy="10.700" r="1.500" fill="#fff" stroke="#000" stroke-width=".8"/></svg>
<svg class="ic" style="left:61px;top:129px" width="16" height="16" viewBox="0 0 16 16"><path d="M1.500 2.500q0-1.500 1.500-1.500h7l3 3-3 3h-7q-1.500 0-1.500-1.500z" fill="#f3f389" stroke="#7b7b00" stroke-width="1"/><circle cx="10.500" cy="4" r=".9" fill="#000"/><path d="M12.500 5q2 1.500 0 4" fill="none" stroke="#000"/><path d="M1.500 10.500h12" stroke="#000" stroke-width="1.300" stroke-dasharray="3 1.500"/><path d="M1.500 15v-1q0-1.500 1.500-1.500M6 15v-1q0-1.500 1.500-1.500M10.500 15v-1q0-1.500 1.500-1.500" fill="none" stroke="#000" stroke-width="1.200"/></svg>
<svg class="ic" style="left:61px;top:145px" width="16" height="16" viewBox="0 0 16 16"><ellipse cx="8" cy="4" rx="6.300" ry="2.800" fill="#f3f389" stroke="#000" stroke-width="1.300"/><path d="M1.700 4.500v3q0 2.500 3.300 3.500v2.500l1.500 1.500h3l1.500-1.500v-2.500q3.300-1 3.300-3.500v-3q-1 2.500-6.300 2.500t-6.300-2.500z" fill="#ece63f" stroke="#000" stroke-width="1.300" stroke-linejoin="round"/><path d="M5 9.500h6M6 11.500h4" stroke="#7b7b00" stroke-width="1.100"/><path d="M8 9v5" stroke="#7b7b00"/></svg>

</div>
<!-- splitter -->
<div class="abs" style="left:120px;top:102px;width:11px;height:389px;background:linear-gradient(to right,#e4e4e4 0,#f6f6f6 3px,#fdfdfd 6px,#f0f0f0 9px,#e0e0e0 11px)"></div>
<div class="abs" style="left:132px;top:103px;width:752px;height:388px;background:#fff"></div>
<div class="abs" style="left:132px;top:103px;width:48px;height:388px;background:#f1f1f1"></div>
<div class="abs" style="left:181px;top:103px;width:4px;height:388px;background:#f7f7f7"></div>
<svg class="abs" style="left:0;top:0" width="884" height="491" shape-rendering="crispEdges">
<rect x="186" y="274" width="698" height="1" fill="#dedede"/>
<rect x="132" y="272" width="49" height="1" fill="#a8a8a8"/>
<rect x="132" y="273" width="49" height="1" fill="#fdfdfd"/>
<rect x="186" y="317" width="698" height="1" fill="#dedede"/>
<rect x="132" y="315" width="49" height="1" fill="#a8a8a8"/>
<rect x="132" y="316" width="49" height="1" fill="#fdfdfd"/>
<rect x="186" y="489" width="698" height="1" fill="#dedede"/>
<rect x="132" y="487" width="49" height="1" fill="#a8a8a8"/>
<rect x="132" y="488" width="49" height="1" fill="#fdfdfd"/>
<path d="M185 102.5h3M186.5 101v3M185 145.5h3M186.5 144v3M185 188.5h3M186.5 187v3M185 231.5h3M186.5 230v3M185 274.5h3M186.5 273v3M185 317.5h3M186.5 316v3M185 360.5h3M186.5 359v3M185 403.5h3M186.5 402v3M185 446.5h3M186.5 445v3M185 489.5h3M186.5 488v3M275 102.5h3M276.5 101v3M275 145.5h3M276.5 144v3M275 188.5h3M276.5 187v3M275 231.5h3M276.5 230v3M275 274.5h3M276.5 273v3M275 317.5h3M276.5 316v3M275 360.5h3M276.5 359v3M275 403.5h3M276.5 402v3M275 446.5h3M276.5 445v3M275 489.5h3M276.5 488v3M365 102.5h3M366.5 101v3M365 145.5h3M366.5 144v3M365 188.5h3M366.5 187v3M365 231.5h3M366.5 230v3M365 274.5h3M366.5 273v3M365 317.5h3M366.5 316v3M365 360.5h3M366.5 359v3M365 403.5h3M366.5 402v3M365 446.5h3M366.5 445v3M365 489.5h3M366.5 488v3M455 102.5h3M456.5 101v3M455 145.5h3M456.5 144v3M455 188.5h3M456.5 187v3M455 231.5h3M456.5 230v3M455 274.5h3M456.5 273v3M455 317.5h3M456.5 316v3M455 360.5h3M456.5 359v3M455 403.5h3M456.5 402v3M455 446.5h3M456.5 445v3M455 489.5h3M456.5 488v3M545 102.5h3M546.5 101v3M545 145.5h3M546.5 144v3M545 188.5h3M546.5 187v3M545 231.5h3M546.5 230v3M545 274.5h3M546.5 273v3M545 317.5h3M546.5 316v3M545 360.5h3M546.5 359v3M545 403.5h3M546.5 402v3M545 446.5h3M546.5 445v3M545 489.5h3M546.5 488v3M635 102.5h3M636.5 101v3M635 145.5h3M636.5 144v3M635 188.5h3M636.5 187v3M635 231.5h3M636.5 230v3M635 274.5h3M636.5 273v3M635 317.5h3M636.5 316v3M635 360.5h3M636.5 359v3M635 403.5h3M636.5 402v3M635 446.5h3M636.5 445v3M635 489.5h3M636.5 488v3M725 102.5h3M726.5 101v3M725 145.5h3M726.5 144v3M725 188.5h3M726.5 187v3M725 231.5h3M726.5 230v3M725 274.5h3M726.5 273v3M725 317.5h3M726.5 316v3M725 360.5h3M726.5 359v3M725 403.5h3M726.5 402v3M725 446.5h3M726.5 445v3M725 489.5h3M726.5 488v3M815 102.5h3M816.5 101v3M815 145.5h3M816.5 144v3M815 188.5h3M816.5 187v3M815 231.5h3M816.5 230v3M815 274.5h3M816.5 273v3M815 317.5h3M816.5 316v3M815 360.5h3M816.5 359v3M815 403.5h3M816.5 402v3M815 446.5h3M816.5 445v3M815 489.5h3M816.5 488v3" stroke="#d9d9d9" stroke-width="1" fill="none"/>
<rect x="186" y="145" width="1" height="1" fill="#c4c4c4"/>
<rect x="186" y="188" width="1" height="1" fill="#c4c4c4"/>
<rect x="186" y="231" width="1" height="1" fill="#c4c4c4"/>
<rect x="186" y="274" width="1" height="1" fill="#c4c4c4"/>
<rect x="186" y="317" width="1" height="1" fill="#c4c4c4"/>
<rect x="186" y="360" width="1" height="1" fill="#c4c4c4"/>
<rect x="186" y="403" width="1" height="1" fill="#c4c4c4"/>
<rect x="186" y="446" width="1" height="1" fill="#c4c4c4"/>
<rect x="186" y="489" width="1" height="1" fill="#c4c4c4"/>
<rect x="276" y="145" width="1" height="1" fill="#c4c4c4"/>
<rect x="276" y="188" width="1" height="1" fill="#c4c4c4"/>
<rect x="276" y="231" width="1" height="1" fill="#c4c4c4"/>
<rect x="276" y="274" width="1" height="1" fill="#c4c4c4"/>
<rect x="276" y="317" width="1" height="1" fill="#c4c4c4"/>
<rect x="276" y="360" width="1" height="1" fill="#c4c4c4"/>
<rect x="276" y="403" width="1" height="1" fill="#c4c4c4"/>
<rect x="276" y="446" width="1" height="1" fill="#c4c4c4"/>
<rect x="276" y="489" width="1" height="1" fill="#c4c4c4"/>
<rect x="366" y="145" width="1" height="1" fill="#c4c4c4"/>
<rect x="366" y="188" width="1" height="1" fill="#c4c4c4"/>
<rect x="366" y="231" width="1" height="1" fill="#c4c4c4"/>
<rect x="366" y="274" width="1" height="1" fill="#c4c4c4"/>
<rect x="366" y="317" width="1" height="1" fill="#c4c4c4"/>
<rect x="366" y="360" width="1" height="1" fill="#c4c4c4"/>
<rect x="366" y="403" width="1" height="1" fill="#c4c4c4"/>
<rect x="366" y="446" width="1" height="1" fill="#c4c4c4"/>
<rect x="366" y="489" width="1" height="1" fill="#c4c4c4"/>
<rect x="456" y="145" width="1" height="1" fill="#c4c4c4"/>
<rect x="456" y="188" width="1" height="1" fill="#c4c4c4"/>
<rect x="456" y="231" width="1" height="1" fill="#c4c4c4"/>
<rect x="456" y="274" width="1" height="1" fill="#c4c4c4"/>
<rect x="456" y="317" width="1" height="1" fill="#c4c4c4"/>
<rect x="456" y="360" width="1" height="1" fill="#c4c4c4"/>
<rect x="456" y="403" width="1" height="1" fill="#c4c4c4"/>
<rect x="456" y="446" width="1" height="1" fill="#c4c4c4"/>
<rect x="456" y="489" width="1" height="1" fill="#c4c4c4"/>
<rect x="546" y="145" width="1" height="1" fill="#c4c4c4"/>
<rect x="546" y="188" width="1" height="1" fill="#c4c4c4"/>
<rect x="546" y="231" width="1" height="1" fill="#c4c4c4"/>
<rect x="546" y="274" width="1" height="1" fill="#c4c4c4"/>
<rect x="546" y="317" width="1" height="1" fill="#c4c4c4"/>
<rect x="546" y="360" width="1" height="1" fill="#c4c4c4"/>
<rect x="546" y="403" width="1" height="1" fill="#c4c4c4"/>
<rect x="546" y="446" width="1" height="1" fill="#c4c4c4"/>
<rect x="546" y="489" width="1" height="1" fill="#c4c4c4"/>
<rect x="636" y="145" width="1" height="1" fill="#c4c4c4"/>
<rect x="636" y="188" width="1" height="1" fill="#c4c4c4"/>
<rect x="636" y="231" width="1" height="1" fill="#c4c4c4"/>
<rect x="636" y="274" width="1" height="1" fill="#c4c4c4"/>
<rect x="636" y="317" width="1" height="1" fill="#c4c4c4"/>
<rect x="636" y="360" width="1" height="1" fill="#c4c4c4"/>
<rect x="636" y="403" width="1" height="1" fill="#c4c4c4"/>
<rect x="636" y="446" width="1" height="1" fill="#c4c4c4"/>
<rect x="636" y="489" width="1" height="1" fill="#c4c4c4"/>
<rect x="726" y="145" width="1" height="1" fill="#c4c4c4"/>
<rect x="726" y="188" width="1" height="1" fill="#c4c4c4"/>
<rect x="726" y="231" width="1" height="1" fill="#c4c4c4"/>
<rect x="726" y="274" width="1" height="1" fill="#c4c4c4"/>
<rect x="726" y="317" width="1" height="1" fill="#c4c4c4"/>
<rect x="726" y="360" width="1" height="1" fill="#c4c4c4"/>
<rect x="726" y="403" width="1" height="1" fill="#c4c4c4"/>
<rect x="726" y="446" width="1" height="1" fill="#c4c4c4"/>
<rect x="726" y="489" width="1" height="1" fill="#c4c4c4"/>
<rect x="816" y="145" width="1" height="1" fill="#c4c4c4"/>
<rect x="816" y="188" width="1" height="1" fill="#c4c4c4"/>
<rect x="816" y="231" width="1" height="1" fill="#c4c4c4"/>
<rect x="816" y="274" width="1" height="1" fill="#c4c4c4"/>
<rect x="816" y="317" width="1" height="1" fill="#c4c4c4"/>
<rect x="816" y="360" width="1" height="1" fill="#c4c4c4"/>
<rect x="816" y="403" width="1" height="1" fill="#c4c4c4"/>
<rect x="816" y="446" width="1" height="1" fill="#c4c4c4"/>
<rect x="816" y="489" width="1" height="1" fill="#c4c4c4"/>
<rect x="180" y="103" width="1" height="388" fill="#adadad"/>
<rect x="185" y="103" width="1" height="388" fill="#327a42"/>
<rect x="815" y="103" width="1" height="388" fill="#327a42"/>
<rect x="131" y="102" width="753" height="1" fill="#000"/>
<rect x="131" y="102" width="1" height="389" fill="#000"/>
<rect x="186" y="122" width="39" height="1" fill="#000"/>
<rect x="238" y="122" width="527" height="1" fill="#000"/>
<rect x="778" y="122" width="37" height="1" fill="#000"/>
<rect x="225" y="116" width="1" height="13" fill="#000"/>
<rect x="237" y="116" width="1" height="13" fill="#000"/>
<rect x="276" y="122" width="1" height="130" fill="#000"/>
<rect x="276" y="165" width="489" height="1" fill="#000"/>
<rect x="778" y="165" width="37" height="1" fill="#000"/>
<rect x="276" y="208" width="489" height="1" fill="#000"/>
<rect x="778" y="208" width="37" height="1" fill="#000"/>
<rect x="276" y="251" width="489" height="1" fill="#000"/>
<rect x="778" y="251" width="37" height="1" fill="#000"/>
<rect x="815" y="119" width="1" height="7" fill="#000"/>
<rect x="815" y="162" width="1" height="7" fill="#000"/>
<rect x="815" y="205" width="1" height="7" fill="#000"/>
<rect x="815" y="248" width="1" height="7" fill="#000"/>
<rect x="815" y="291" width="1" height="7" fill="#000"/>
<rect x="186" y="294" width="39" height="1" fill="#000"/>
<rect x="238" y="294" width="77" height="1" fill="#000"/>
<rect x="328" y="294" width="437" height="1" fill="#000"/>
<rect x="778" y="294" width="37" height="1" fill="#000"/>
<rect x="225" y="288" width="1" height="13" fill="#000"/>
<rect x="237" y="288" width="1" height="13" fill="#000"/>
<rect x="315" y="288" width="1" height="13" fill="#000"/>
<rect x="327" y="288" width="1" height="13" fill="#000"/>
<rect x="186" y="337" width="39" height="1" fill="#000"/>
<rect x="238" y="337" width="492" height="1" fill="#000"/>
<rect x="225" y="331" width="1" height="13" fill="#000"/>
<rect x="237" y="331" width="1" height="13" fill="#000"/>
<rect x="186" y="380" width="39" height="1" fill="#000"/>
<rect x="238" y="380" width="39" height="1" fill="#000"/>
<rect x="225" y="374" width="1" height="13" fill="#000"/>
<rect x="237" y="374" width="1" height="13" fill="#000"/>
<rect x="276" y="337" width="1" height="87" fill="#000"/>
<rect x="276" y="423" width="454" height="1" fill="#000"/>
<rect x="730.5" y="331.5" width="81" height="68" fill="#fff" stroke="#000" stroke-width="1"/>
<rect x="731" y="361" width="80" height="1" fill="#000"/>
<rect x="812" y="337" width="3" height="1" fill="#000"/>
<rect x="815" y="333" width="1" height="8" fill="#000"/>
<rect x="730.5" y="417.5" width="81" height="68" fill="#fff" stroke="#000" stroke-width="1"/>
<rect x="731" y="447" width="80" height="1" fill="#000"/>
<rect x="812" y="423" width="3" height="1" fill="#000"/>
<rect x="815" y="419" width="1" height="8" fill="#000"/>
</svg>
<svg class="abs" style="left:0;top:0" width="884" height="491">
<circle cx="771.5" cy="122.5" r="6.2" fill="#fff" stroke="#000" stroke-width="1.1"/>
<circle cx="771.5" cy="165.5" r="6.2" fill="#fff" stroke="#000" stroke-width="1.1"/>
<circle cx="771.5" cy="208.5" r="6.2" fill="#fff" stroke="#000" stroke-width="1.1"/>
<circle cx="771.5" cy="251.5" r="6.2" fill="#fff" stroke="#000" stroke-width="1.1"/>
<circle cx="771.5" cy="294.5" r="6.2" fill="#fff" stroke="#000" stroke-width="1.1"/>
<path d="M225.5 128L237.5 116.5" stroke="#000" stroke-width="1.1" fill="none"/>
</svg>
<span class="abs " style="left:134px;top:103px;font-size:11px;line-height:12px;color:#000;white-space:nowrap;font-family:'Liberation Sans',sans-serif;">22</span>
<span class="abs " style="left:160px;top:115px;font-size:11px;line-height:12px;color:#000;white-space:nowrap;font-family:'Liberation Sans',sans-serif;">57</span>
<span class="abs " style="left:134px;top:275px;font-size:11px;line-height:12px;color:#000;white-space:nowrap;font-family:'Liberation Sans',sans-serif;">23</span>
<span class="abs " style="left:160px;top:287px;font-size:11px;line-height:12px;color:#000;white-space:nowrap;font-family:'Liberation Sans',sans-serif;">62</span>
<span class="abs " style="left:134px;top:318px;font-size:11px;line-height:12px;color:#000;white-space:nowrap;font-family:'Liberation Sans',sans-serif;">24</span>
<span class="abs " style="left:160px;top:330px;font-size:11px;line-height:12px;color:#000;white-space:nowrap;font-family:'Liberation Sans',sans-serif;">65</span>
<span class="abs lad" style="left:219px;top:105px;font-size:12px;line-height:12px;color:#000;white-space:nowrap;letter-spacing:-1.2px;">P_On</span>
<span class="abs lad" style="left:207px;top:131px;font-size:12px;line-height:12px;color:#19546f;white-space:nowrap;">常通标志</span>
<span class="abs lad" style="left:216px;top:277px;font-size:12px;line-height:12px;color:#000;white-space:nowrap;letter-spacing:-1.2px;">40.05</span>
<span class="abs lad" style="left:309px;top:277px;font-size:12px;line-height:12px;color:#000;white-space:nowrap;letter-spacing:-1.2px;">P_1s</span>
<span class="abs lad" style="left:279px;top:303px;font-size:12px;line-height:12px;color:#19546f;white-space:nowrap;"><span style="letter-spacing:-1.2px">1.0</span>秒时钟脉<span style="letter-spacing:-1.2px">...</span></span>
<span class="abs lad" style="left:216px;top:320px;font-size:12px;line-height:12px;color:#000;white-space:nowrap;letter-spacing:-1.2px;">40.06</span>
<span class="abs lad" style="left:216px;top:363px;font-size:12px;line-height:12px;color:#000;white-space:nowrap;letter-spacing:-1.2px;">40.07</span>
<span class="abs lad" style="left:759px;top:105px;font-size:12px;line-height:12px;color:#000;white-space:nowrap;letter-spacing:-1.2px;">5.08</span>
<span class="abs lad" style="left:759px;top:148px;font-size:12px;line-height:12px;color:#000;white-space:nowrap;letter-spacing:-1.2px;">5.09</span>
<span class="abs lad" style="left:759px;top:191px;font-size:12px;line-height:12px;color:#000;white-space:nowrap;letter-spacing:-1.2px;">5.11</span>
<span class="abs lad" style="left:759px;top:234px;font-size:12px;line-height:12px;color:#000;white-space:nowrap;letter-spacing:-1.2px;">5.12</span>
<span class="abs lad" style="left:759px;top:277px;font-size:12px;line-height:12px;color:#000;white-space:nowrap;letter-spacing:-1.2px;">5.15</span>
<span class="abs lad" style="left:747px;top:341px;font-size:12px;line-height:12px;color:#000;white-space:nowrap;letter-spacing:-1.2px;">DIFU(13)</span>
<span class="abs lad" style="left:756px;top:364px;font-size:12px;line-height:12px;color:#000;white-space:nowrap;letter-spacing:-1.2px;">89.11</span>
<span class="abs lad" style="left:747px;top:427px;font-size:12px;line-height:12px;color:#000;white-space:nowrap;letter-spacing:-1.2px;">DIFD(14)</span>
<span class="abs lad" style="left:756px;top:450px;font-size:12px;line-height:12px;color:#000;white-space:nowrap;letter-spacing:-1.2px;">89.12</span>
<span class="abs lad" style="left:826px;top:342px;font-size:12px;line-height:12px;color:#000;white-space:nowrap;">上升沿微分</span>
<span class="abs lad" style="left:826px;top:364px;font-size:12px;line-height:12px;color:#000;white-space:nowrap;">位</span>
<span class="abs lad" style="left:826px;top:428px;font-size:12px;line-height:12px;color:#000;white-space:nowrap;">下降沿微分</span>
<span class="abs lad" style="left:826px;top:450px;font-size:12px;line-height:12px;color:#000;white-space:nowrap;">位</span>
</body>
</html>
